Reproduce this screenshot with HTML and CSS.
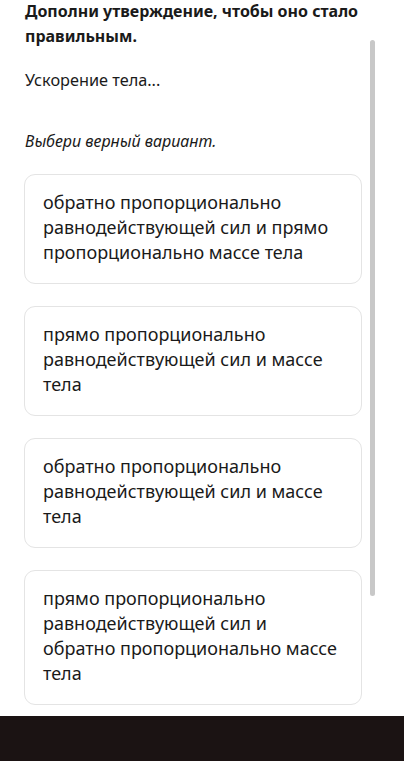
FILE: index.html
```html
<!DOCTYPE html>
<html>
<head>
  <title>Задание</title>
  <link rel="stylesheet" href="styles.css">
</head>
<body>

  <div class="page">
    <div class="content">
      <h1 class="task-title">Дополни утверждение, чтобы оно стало правильным.</h1>
      <p class="task-text">Ускорение тела...</p>
      <p class="task-hint">Выбери верный вариант.</p>

      <div class="options">
        <div class="option">обратно пропорционально равнодействующей сил и прямо пропорционально массе тела</div>
        <div class="option">прямо пропорционально равнодействующей сил и массе тела</div>
        <div class="option">обратно пропорционально равнодействующей сил и массе тела</div>
        <div class="option">прямо пропорционально равнодействующей сил и обратно пропорционально массе тела</div>
      </div>
    </div>
    <div class="scrollbar"></div>
  </div>

  <div class="bottom-bar"></div>

</body>
</html>
```

FILE: styles.css
```css
html, body {
  margin: 0;
  padding: 0;
}

body {
  font-family: 'Noto Sans', 'Open Sans', sans-serif;
  background: #fff;
  color: #1a1a1a;
  height: 761px;
  display: flex;
  flex-direction: column;
  overflow: hidden;
}

.page {
  position: relative;
  flex: 1;
  overflow: hidden;
}

.content {
  padding: 0 42px 0 24px;
}

.task-title {
  margin: -1px 0 0 1px;
  font-size: 16px;
  line-height: 25px;
  font-weight: 700;
}

.task-text {
  margin: 19px 0 0 1px;
  font-size: 16.3px;
  line-height: 24px;
}

.task-hint {
  margin: 37px 0 0 1px;
  font-size: 16px;
  line-height: 24px;
  font-style: italic;
}

.options {
  margin-top: 21px;
  display: flex;
  flex-direction: column;
  gap: 22px;
}

.option {
  border: 1px solid #e4e4e4;
  border-radius: 11px;
  padding: 15px 19px 18px 18px;
  font-size: 18px;
  line-height: 25px;
}

/* overlay scrollbar thumb */
.scrollbar {
  position: absolute;
  left: 370px;
  top: 40px;
  width: 5px;
  height: 556px;
  border-radius: 3px;
  background: #c8c8c8;
}

.bottom-bar {
  height: 45px;
  background: #1b1313;
}
```
